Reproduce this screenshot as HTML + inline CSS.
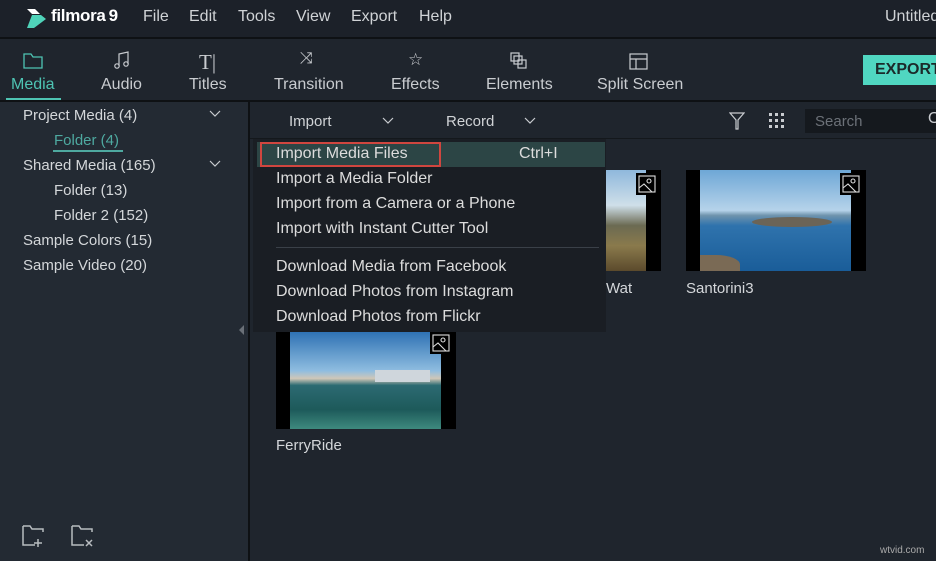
<!DOCTYPE html>
<html><head><meta charset="utf-8"><style>
*{margin:0;padding:0;box-sizing:border-box}
body{width:936px;height:561px;overflow:hidden;background:#1f252d;font-family:"Liberation Sans",sans-serif;color:#d4d7da;position:relative}
.a{position:absolute}
.menu span{position:absolute;top:8px;font-size:16px;color:#d0d3d6}
.tb{position:absolute;top:76px;font-size:16px;color:#c9ccd0;text-align:center}
.lp{font-size:15px;color:#d4d7da;position:absolute}
.dd div{position:absolute;left:23px;font-size:16px;color:#dcdcdc}
.thumb{position:absolute;background:#000}
.ic{position:absolute;width:22px;height:22px;background:#000;border:1px solid #000}
</style></head><body>
<!-- title bar -->
<div class="a" style="left:0;top:0;width:936px;height:37px;background:#1c2129"></div>
<div class="a" style="left:0;top:37px;width:936px;height:2px;background:#0e1114"></div>
<svg class="a" style="left:24px;top:5px" width="24" height="24" viewBox="0 0 24 24"><path d="M3 4 L11 4 L16 9 L8 9Z" fill="#fff"/><path d="M8 10 L17 10 L22 14 L10 23 L3 23Z" fill="#4fd3b9"/></svg>
<div class="a" style="left:51px;top:6px;font-size:17px;font-weight:bold;color:#fff;letter-spacing:-0.3px">filmora<span style="margin-left:3px">9</span></div>
<div class="menu"><span style="left:143px">File</span><span style="left:189px">Edit</span><span style="left:238px">Tools</span><span style="left:296px">View</span><span style="left:351px">Export</span><span style="left:419px">Help</span><span style="left:885px">Untitled</span></div>
<!-- toolbar -->
<div class="a" style="left:0;top:39px;width:936px;height:61px;background:#1f252d"></div>
<svg class="a" style="left:23px;top:53px" width="20" height="16" viewBox="0 0 20 16" fill="none" stroke="#4ec4b3" stroke-width="1.3"><path d="M1 1 H8 L10 4 H19 V15 H1Z"/></svg>
<svg class="a" style="left:113px;top:51px" width="18" height="20" viewBox="0 0 18 20" fill="none" stroke="#c9ccd0" stroke-width="1.2"><path d="M6 15 V3 L15 1 V13"/><circle cx="4" cy="15" r="2.2"/><circle cx="13" cy="13" r="2.2"/></svg>
<div class="a" style="left:199px;top:50px;font-family:'Liberation Serif',serif;font-size:21px;color:#c9ccd0">T|</div>
<div class="a" style="left:300px;top:50px;font-size:16px;color:#c9ccd0">⤨</div>
<div class="a" style="left:408px;top:50px;font-size:17px;color:#c9ccd0">☆</div>
<svg class="a" style="left:510px;top:52px" width="18" height="18" viewBox="0 0 18 18" fill="none" stroke="#c9ccd0" stroke-width="1.2"><rect x="1" y="1" width="8" height="8"/><rect x="4" y="4" width="8" height="8"/><rect x="8" y="8" width="8" height="8"/></svg>
<svg class="a" style="left:629px;top:53px" width="19" height="17" viewBox="0 0 19 17" fill="none" stroke="#c9ccd0" stroke-width="1.2"><rect x="1" y="1" width="17" height="15"/><path d="M1 6 H18 M7 6 V16"/></svg>
<div class="tb" style="left:11px;color:#4ec4b3">Media</div>
<div class="a" style="left:6px;top:98px;width:55px;height:2px;background:#4ec4b3"></div>
<div class="tb" style="left:101px">Audio</div>
<div class="tb" style="left:189px">Titles</div>
<div class="tb" style="left:274px">Transition</div>
<div class="tb" style="left:391px">Effects</div>
<div class="tb" style="left:486px">Elements</div>
<div class="tb" style="left:597px">Split Screen</div>
<div class="a" style="left:863px;top:55px;width:80px;height:30px;background:#50d7c1;color:#1b2a2a;font-weight:bold;font-size:16px;padding:6px 0 0 12px">EXPORT</div>
<div class="a" style="left:0;top:100px;width:936px;height:2px;background:#0e1114"></div>
<!-- left panel -->
<div class="a" style="left:0;top:102px;width:248px;height:459px;background:#232a33"></div>
<div class="a" style="left:248px;top:102px;width:2px;height:459px;background:#0e1114"></div>
<div class="lp" style="left:23px;top:107px">Project Media (4)</div>
<div class="lp" style="left:54px;top:132px;color:#4ea9a0">Folder (4)</div>
<div class="a" style="left:53px;top:150px;width:70px;height:2px;background:#4ea9a0"></div>
<div class="lp" style="left:23px;top:157px">Shared Media (165)</div>
<div class="lp" style="left:54px;top:182px">Folder (13)</div>
<div class="lp" style="left:54px;top:207px">Folder 2 (152)</div>
<div class="lp" style="left:23px;top:232px">Sample Colors (15)</div>
<div class="lp" style="left:23px;top:257px">Sample Video (20)</div>
<svg class="a" style="left:209px;top:110px" width="12" height="8"><path d="M1 1 L6 6 L11 1" fill="none" stroke="#c9ccd0" stroke-width="1.2"/></svg>
<svg class="a" style="left:209px;top:160px" width="12" height="8"><path d="M1 1 L6 6 L11 1" fill="none" stroke="#c9ccd0" stroke-width="1.2"/></svg>
<svg class="a" style="left:21px;top:524px" width="26" height="24" fill="none" stroke="#b8bcc0" stroke-width="1.5"><path d="M2 2 H9 L11 5 H22 V8 M2 2 V21 H14"/><path d="M17 15 V23 M13 19 H21"/></svg>
<svg class="a" style="left:70px;top:524px" width="26" height="24" fill="none" stroke="#b8bcc0" stroke-width="1.5"><path d="M2 2 H9 L11 5 H22 V8 M2 2 V21 H14"/><path d="M16 16 L22 22 M22 16 L16 22"/></svg>
<div class="a" style="left:239px;top:325px;width:0;height:0;border-top:5px solid transparent;border-bottom:5px solid transparent;border-right:5px solid #6a7078"></div>
<!-- content toolbar -->
<div class="a" style="left:250px;top:102px;width:686px;height:37px;background:#1f252d"></div>
<div class="a" style="left:289px;top:113px;font-size:15px;color:#d0d3d6">Import</div>
<svg class="a" style="left:382px;top:117px" width="12" height="8"><path d="M1 1 L6 6 L11 1" fill="none" stroke="#c9ccd0" stroke-width="1.2"/></svg>
<div class="a" style="left:446px;top:113px;font-size:15px;color:#d0d3d6">Record</div>
<svg class="a" style="left:524px;top:117px" width="12" height="8"><path d="M1 1 L6 6 L11 1" fill="none" stroke="#c9ccd0" stroke-width="1.2"/></svg>
<svg class="a" style="left:729px;top:112px" width="16" height="18" fill="none" stroke="#c9ccd0" stroke-width="1.2"><path d="M1 1 H15 L9 8 V17 H7 V8Z"/></svg>
<svg class="a" style="left:769px;top:113px" width="16" height="16" fill="#c9ccd0"><rect x="0" y="0" width="3" height="3"/><rect x="6" y="0" width="3" height="3"/><rect x="12" y="0" width="3" height="3"/><rect x="0" y="6" width="3" height="3"/><rect x="6" y="6" width="3" height="3"/><rect x="12" y="6" width="3" height="3"/><rect x="0" y="12" width="3" height="3"/><rect x="6" y="12" width="3" height="3"/><rect x="12" y="12" width="3" height="3"/></svg>
<div class="a" style="left:805px;top:109px;width:131px;height:24px;background:#15191e"></div>
<div class="a" style="left:815px;top:113px;font-size:15px;color:#6c7178">Search</div>
<div class="a" style="left:928px;top:110px;font-size:16px;color:#c9ccd0">O</div>
<div class="a" style="left:250px;top:138px;width:686px;height:1px;background:#14181c"></div>
<!-- thumbnails -->
<div class="thumb" style="left:606px;top:170px;width:55px;height:101px"><div class="a" style="left:0;top:0;width:40px;height:101px;background:linear-gradient(#8fb8dc 0%,#cfdfe9 35%,#6b6a52 55%,#8a7a4c 75%,#5b4a2c 100%)"></div></div>
<div class="thumb" style="left:686px;top:170px;width:180px;height:101px"><div class="a" style="left:14px;top:0;width:151px;height:101px;background:linear-gradient(#6ea7d6 0%,#b6d3ea 40%,#6f93ad 45%,#2f73ad 55%,#1a5d99 100%)"><div class="a" style="left:52px;top:47px;width:80px;height:10px;border-radius:50%;background:#6b6457"></div><div class="a" style="left:0;top:85px;width:40px;height:16px;background:#7a6a55;border-radius:0 60% 0 0"></div></div></div>
<div class="thumb" style="left:276px;top:332px;width:180px;height:97px"><div class="a" style="left:14px;top:0;width:151px;height:97px;background:linear-gradient(#2f72b4 0%,#8fbde0 40%,#d0c7b8 48%,#2c6a72 55%,#1d5a5a 80%,#3e8a7e 100%)"><div class="a" style="left:85px;top:38px;width:55px;height:12px;background:#cfd6dc"></div></div></div>
<div class="ic" style="left:636px;top:173px"></div><svg class="a" style="left:638px;top:175px" width="18" height="18" fill="none" stroke="#ddd" stroke-width="1.1"><rect x="1" y="1" width="16" height="16"/><circle cx="11" cy="6" r="2"/><path d="M1 13 L6 9 L14 17"/></svg>
<div class="ic" style="left:840px;top:173px"></div><svg class="a" style="left:842px;top:175px" width="18" height="18" fill="none" stroke="#ddd" stroke-width="1.1"><rect x="1" y="1" width="16" height="16"/><circle cx="11" cy="6" r="2"/><path d="M1 13 L6 9 L14 17"/></svg>
<div class="ic" style="left:430px;top:332px"></div><svg class="a" style="left:432px;top:334px" width="18" height="18" fill="none" stroke="#ddd" stroke-width="1.1"><rect x="1" y="1" width="16" height="16"/><circle cx="11" cy="6" r="2"/><path d="M1 13 L6 9 L14 17"/></svg>
<div class="a" style="left:606px;top:280px;font-size:15px;color:#d4d7da">Wat</div>
<div class="a" style="left:686px;top:280px;font-size:15px;color:#d4d7da">Santorini3</div>
<div class="a" style="left:276px;top:437px;font-size:15px;color:#d4d7da">FerryRide</div>
<!-- dropdown -->
<div class="a dd" style="left:253px;top:139px;width:353px;height:193px;background:#1a1e24">
 <div class="a" style="left:4px;top:3px;width:348px;height:25px;background:#2c4545"></div>
 <div class="a" style="left:7px;top:3px;width:181px;height:25px;border:2px solid #d0463f"></div>
 <div style="top:6px">Import Media Files</div>
 <div style="left:266px;top:6px">Ctrl+I</div>
 <div style="top:31px">Import a Media Folder</div>
 <div style="top:56px">Import from a Camera or a Phone</div>
 <div style="top:81px">Import with Instant Cutter Tool</div>
 <div class="a" style="left:23px;top:108px;width:323px;height:1px;background:#3a4048"></div>
 <div style="top:119px">Download Media from Facebook</div>
 <div style="top:144px">Download Photos from Instagram</div>
 <div style="top:169px">Download Photos from Flickr</div>
</div>
<div class="a" style="left:880px;top:545px;font-size:10px;color:#aaa">wtvid.com</div>
</body></html>
